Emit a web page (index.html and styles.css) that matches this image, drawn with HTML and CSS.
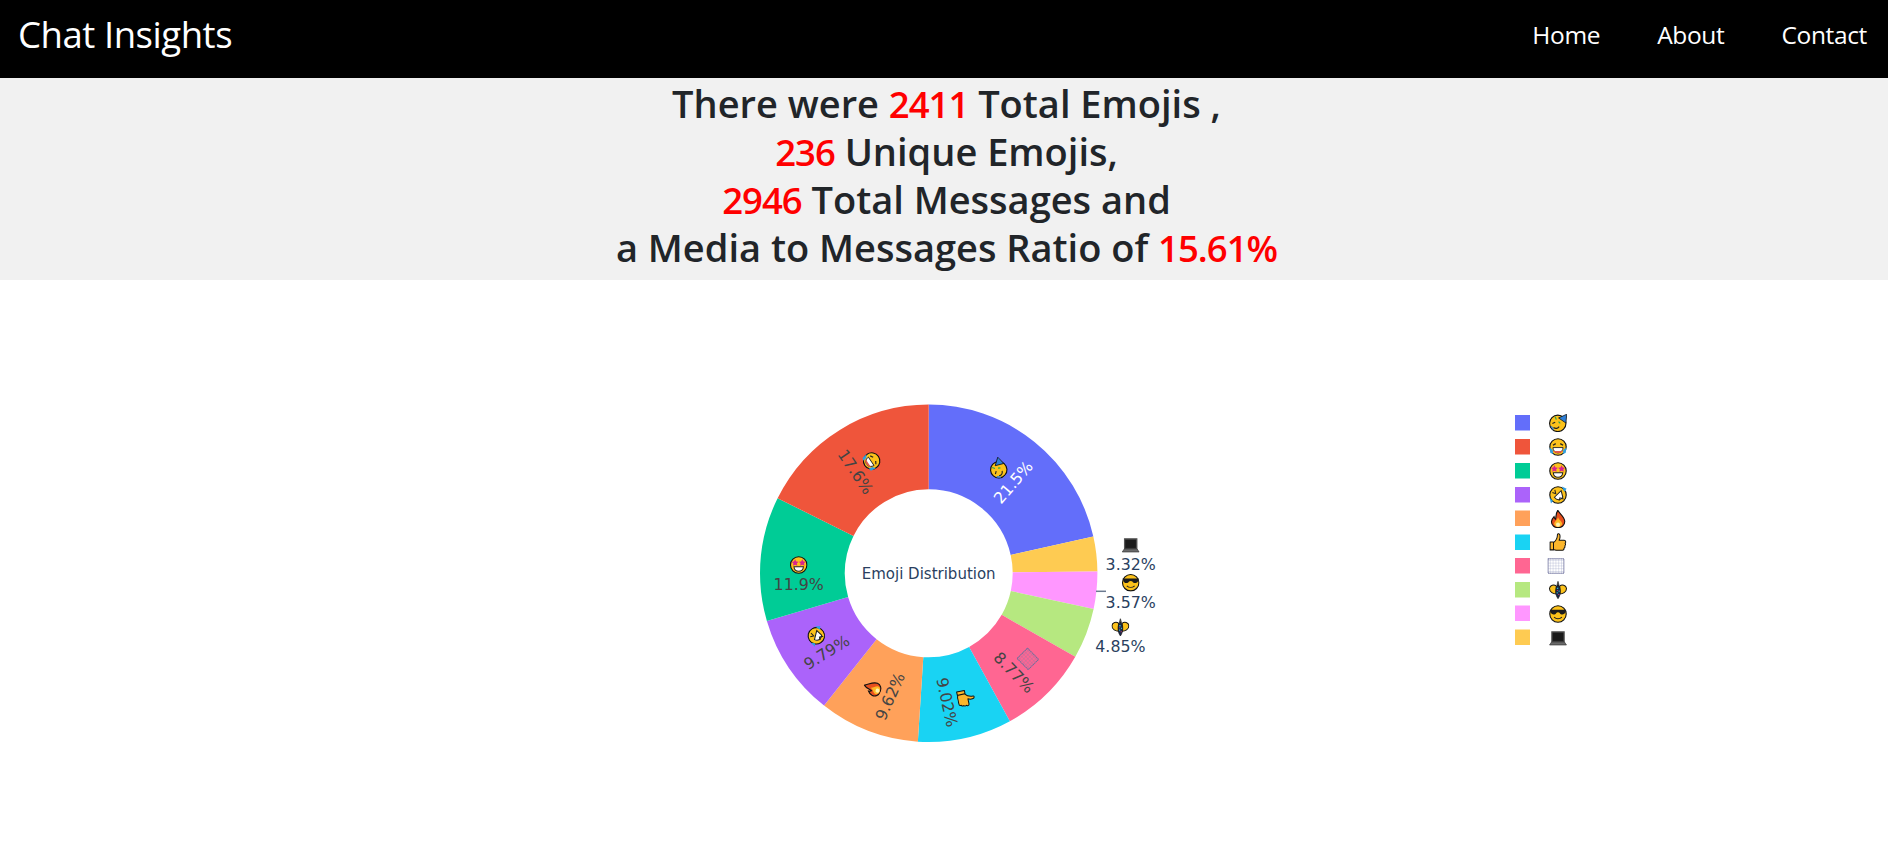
FILE: index.html
```html
<!DOCTYPE html>
<html lang="en">
<head>
<meta charset="utf-8">
<title>Chat Insights</title>
<link rel="stylesheet" href="styles.css">
</head>
<body>
<nav class="navbar">
  <a class="brand" href="#">Chat Insights</a>
  <ul class="nav-links">
    <li><a href="#">Home</a></li>
    <li><a href="#">About</a></li>
    <li><a href="#">Contact</a></li>
  </ul>
</nav>
<header class="summary">
  <h1>There were <span class="num">2411</span> Total Emojis ,<br>
  <span class="num">236</span> Unique Emojis,<br>
  <span class="num">2946</span> Total Messages and<br>
  a Media to Messages Ratio of <span class="num">15.61%</span></h1>
</header>
<main class="chart">
<svg class="plot" viewBox="0 280 1888 583" width="1888" height="583" xmlns="http://www.w3.org/2000/svg">
  <defs>
    <symbol id="e-party" viewBox="0 0 16 16">
      <circle cx="7.800" cy="8.300" r="7.300" fill="#fcc21b" stroke="#111" stroke-width="1"/>
      <path d="M8.500 3.500 15.800.2 15 8Z" fill="#2f7fd6" stroke="#111" stroke-width=".7"/>
      <path d="M3 8.500 5.500 7.300M4 12c2 1.500 4 .8 5-.8" fill="none" stroke="#222" stroke-width="1"/>
      <path d="M5.500 2.500 6.500 5M8.500 6.800l1.500 1.500" stroke="#2fa84f" stroke-width="1.100"/>
      <path d="M2 11 4 14" stroke="#2f7fd6" stroke-width="1.200"/>
    </symbol>
    <symbol id="e-joy" viewBox="0 0 16 16">
      <circle cx="8" cy="8" r="7.300" fill="#fcc21b" stroke="#111" stroke-width="1"/>
      <path d="M3.500 6.500 6 5M12.500 6.500 10 5" stroke="#222" stroke-width="1.100" fill="none"/>
      <path d="M3.500 8.500h9C12.500 11 10.500 13.300 8 13.300S3.500 11 3.500 8.500Z" fill="#fff" stroke="#222" stroke-width=".8"/>
      <path d="M3.500 11.500h9C11.500 12.700 9.800 13.300 8 13.300S4.500 12.700 3.500 11.500Z" fill="#e2574c"/>
      <path d="M.5 8.500 3.200 10.500 3.800 14 1.200 13.300ZM15.500 8.500 12.800 10.500 12.200 14 14.800 13.300Z" fill="#2f9ee0"/>
    </symbol>
    <symbol id="e-star" viewBox="0 0 16 16">
      <circle cx="8" cy="8" r="7.300" fill="#fcc21b" stroke="#111" stroke-width="1"/>
      <path d="M4.800 2.800 5.800 4.800 7.900 5.200 6.300 6.600 6.800 8.700 4.800 7.700 2.800 8.700 3.300 6.600 1.700 5.200 3.800 4.800ZM11.200 2.800 12.200 4.800 14.300 5.200 12.700 6.600 13.200 8.700 11.200 7.700 9.200 8.700 9.700 6.600 8.100 5.200 10.200 4.800Z" fill="#d9228f"/>
      <path d="M3.800 9.500h8.400C12 12 10.300 13.500 8 13.500S4 12 3.800 9.500Z" fill="#fff" stroke="#222" stroke-width=".9"/>
    </symbol>
    <symbol id="e-rofl" viewBox="0 0 16 16">
      <circle cx="8" cy="8" r="7.300" fill="#fcc21b" stroke="#111" stroke-width="1"/>
      <path d="M4.800 10 10.800 4.200 12.300 10C10 12.800 7 13 4.800 10Z" fill="#fff" stroke="#222" stroke-width=".9"/>
      <path d="M3 5.800 6 6.800 5.200 3.500M9 13 9.700 10.500 13 11.500" fill="none" stroke="#222" stroke-width=".9"/>
      <path d="M11.500 .5 15.700 2.500 13.500 5ZM.5 10.500 3.500 13 1.800 15.500Z" fill="#2f9ee0"/>
    </symbol>
    <symbol id="e-fire" viewBox="0 0 16 16">
      <path d="M7.800.3C9 3 14 6 14 10.300 14 13.500 11.200 15.700 8 15.700 4.800 15.700 2.200 13.500 2.200 10.500 2.200 8.500 3.300 7 4.500 5.800 4.800 7 5 8 5.800 8.200 6.500 5.500 6 3 7.800.3Z" fill="#e8501e" stroke="#111" stroke-width="1"/>
      <path d="M8 6.500C9 9 11.700 10.300 11.700 12.300 11.700 14 9.800 15.100 8 15.100 6.200 15.100 4.600 14 4.600 12.300 4.600 10.500 7 9.500 8 6.500Z" fill="#fdb827"/>
      <circle cx="8" cy="13" r="1.800" fill="#fff3b0"/>
    </symbol>
    <symbol id="e-thumb" viewBox="0 0 16 16">
      <path d="M1 8h3v7H1ZM4 8.500C6 7 7.500 4.500 7.500 1.500 7.500 .3 9.700 .3 9.800 2.500 10 4 9.500 5.500 9 6.500H13.500C15 6.500 15.300 8.500 14.300 9 15 10 14.700 11 14 11.400 14.500 12.300 14 13.300 13.300 13.500 13.500 14.500 13 15.300 12 15.300H6.500C5.500 15.300 4.800 15 4 14.500Z" fill="#fbb62c" stroke="#111" stroke-width=".9" stroke-linejoin="round"/>
    </symbol>
    <pattern id="tofu-grid" width="2.500" height="2.500" patternUnits="userSpaceOnUse">
      <path d="M0 0h2.500M0 0v2.500" stroke="#7078a8" stroke-opacity=".75" stroke-width=".5" fill="none"/>
    </pattern>
    <symbol id="e-tofu" viewBox="0 0 16 16">
      <rect x="1" y="1.500" width="14" height="13" fill="url(#tofu-grid)" stroke="#6c6f9c" stroke-width=".9" stroke-dasharray="1.400 .4"/>
    </symbol>
    <symbol id="e-pinata" viewBox="0 0 16 16">
      <path d="M8 .3 9 4H7Z" fill="#555" stroke="#222" stroke-width=".6"/>
      <path d="M6.500 4.500C4.500 2.800 .8 3.500 .5 6.500 .3 10 4 11.500 6.500 11.500ZM9.500 4.500C11.500 2.800 15.200 3.500 15.500 6.500 15.700 10 12 11.500 9.500 11.500Z" fill="#fcc21b" stroke="#111" stroke-width=".9"/>
      <path d="M8 3.500C10.800 5.500 10.800 12 8 15.700 5.200 12 5.200 5.500 8 3.500Z" fill="#1b2a4a" stroke="#111" stroke-width=".6"/>
      <path d="M7 6h1.200v1.200H7ZM8.500 8.500h1v1h-1ZM6.800 10h1v1h-1Z" fill="#2fb5c9"/>
      <path d="M8.200 11.500h1v1h-1ZM7 8h.8v.8H7Z" fill="#d9376e"/>
    </symbol>
    <symbol id="e-cool" viewBox="0 0 16 16">
      <circle cx="8" cy="8" r="7.300" fill="#fcc21b" stroke="#111" stroke-width="1"/>
      <path d="M.8 4.300h14.400L14.500 6.500C14 8.700 10.500 9 9.500 7 9 6.200 7 6.200 6.500 7 5.500 9 2 8.700 1.500 6.500Z" fill="#1c1c1c"/>
      <path d="M4.500 10.800C6.500 12.500 9.500 12.500 11.500 10.800" fill="none" stroke="#222" stroke-width="1"/>
    </symbol>
    <symbol id="e-laptop" viewBox="0 0 16 16">
      <path d="M2.500 2.500h11v9h-11Z" fill="#2b2b2b" stroke="#555" stroke-width="1"/>
      <path d="M3.500 3.500h9v7h-9Z" fill="#1b1b1b"/>
      <path d="M2.300 11.500h11.400L15.500 14.200H.5Z" fill="#6a6a6a" stroke="#333" stroke-width=".6"/>
    </symbol>
  </defs>

  <g class="donut" fill="none" stroke-width="84.7" transform="rotate(-90 928.7 573.300)">
    <circle cx="928.700" cy="573.300" r="126.350" pathLength="100" stroke="#636efa" stroke-dasharray="21.500 78.500" stroke-dashoffset="0"/>
    <circle cx="928.700" cy="573.300" r="126.350" pathLength="100" stroke="#fecb52" stroke-dasharray="3.320 96.680" stroke-dashoffset="-21.500"/>
    <circle cx="928.700" cy="573.300" r="126.350" pathLength="100" stroke="#ff97ff" stroke-dasharray="3.570 96.430" stroke-dashoffset="-24.820"/>
    <circle cx="928.700" cy="573.300" r="126.350" pathLength="100" stroke="#b6e880" stroke-dasharray="4.850 95.150" stroke-dashoffset="-28.390"/>
    <circle cx="928.700" cy="573.300" r="126.350" pathLength="100" stroke="#ff6692" stroke-dasharray="8.770 91.230" stroke-dashoffset="-33.240"/>
    <circle cx="928.700" cy="573.300" r="126.350" pathLength="100" stroke="#19d3f3" stroke-dasharray="9.020 90.980" stroke-dashoffset="-42.010"/>
    <circle cx="928.700" cy="573.300" r="126.350" pathLength="100" stroke="#ffa15a" stroke-dasharray="9.620 90.380" stroke-dashoffset="-51.030"/>
    <circle cx="928.700" cy="573.300" r="126.350" pathLength="100" stroke="#ab63fa" stroke-dasharray="9.790 90.210" stroke-dashoffset="-60.650"/>
    <circle cx="928.700" cy="573.300" r="126.350" pathLength="100" stroke="#00cc96" stroke-dasharray="11.900 88.100" stroke-dashoffset="-70.440"/>
    <circle cx="928.700" cy="573.300" r="126.350" pathLength="100" stroke="#ef553b" stroke-dasharray="17.660 82.340" stroke-dashoffset="-82.340"/>
  </g>

  <text class="center-title" x="928.700" y="579">Emoji Distribution</text>

  <g transform="translate(1007.700 477.300) rotate(-49)"><use href="#e-party" x="-9" y="-21" width="18" height="18"/><text class="pct pct-light" y="13">21.5%</text></g>
  <g transform="translate(861.700 467.700) rotate(56)"><use href="#e-joy" x="-9" y="-21" width="18" height="18"/><text class="pct pct-dark" y="13">17.6%</text></g>
  <g transform="translate(798.700 577)"><use href="#e-star" x="-9" y="-21" width="18" height="18"/><text class="pct pct-dark" y="13">11.9%</text></g>
  <g transform="translate(822.700 646) rotate(-32)"><use href="#e-rofl" x="-9" y="-21" width="18" height="18"/><text class="pct pct-dark" y="13">9.79%</text></g>
  <g transform="translate(883.300 693.300) rotate(-66)"><use href="#e-fire" x="-9" y="-21" width="18" height="18"/><text class="pct pct-dark" y="13">9.62%</text></g>
  <g transform="translate(954.300 700.700) rotate(77.500)"><use href="#e-thumb" x="-9" y="-21" width="18" height="18"/><text class="pct pct-dark" y="13">9.02%</text></g>
  <g transform="translate(1019.300 667.300) rotate(45.500)"><use href="#e-tofu" x="-9" y="-21" width="18" height="18"/><text class="pct pct-dark" y="13">8.77%</text></g>
  <g transform="translate(1130.700 557)"><use href="#e-laptop" x="-9" y="-21" width="18" height="18"/><text class="pct pct-out" y="13">3.32%</text></g>
  <g transform="translate(1130.700 594.700)"><use href="#e-cool" x="-9" y="-21" width="18" height="18"/><text class="pct pct-out" y="13">3.57%</text></g>
  <g transform="translate(1120.400 639.300)"><use href="#e-pinata" x="-9" y="-21" width="18" height="18"/><text class="pct pct-out" y="13">4.85%</text></g>
  <path class="connector" d="M1096 591.300h10"/>

  <g class="legend">
    <rect x="1515" y="415" width="15" height="15.500" fill="#636efa"/><use href="#e-party" x="1549" y="414" width="18" height="18"/>
    <rect x="1515" y="439" width="15" height="15.500" fill="#ef553b"/><use href="#e-joy" x="1549" y="438" width="18" height="18"/>
    <rect x="1515" y="463" width="15" height="15.500" fill="#00cc96"/><use href="#e-star" x="1549" y="462" width="18" height="18"/>
    <rect x="1515" y="487" width="15" height="15.500" fill="#ab63fa"/><use href="#e-rofl" x="1549" y="486" width="18" height="18"/>
    <rect x="1515" y="510.500" width="15" height="15.500" fill="#ffa15a"/><use href="#e-fire" x="1549" y="510" width="18" height="18"/>
    <rect x="1515" y="534.500" width="15" height="15.500" fill="#19d3f3"/><use href="#e-thumb" x="1549" y="533" width="18" height="18"/>
    <rect x="1515" y="558" width="15" height="15.500" fill="#ff6692"/><use href="#e-tofu" x="1547" y="557" width="18" height="18"/>
    <rect x="1515" y="582" width="15" height="15.500" fill="#b6e880"/><use href="#e-pinata" x="1549" y="581" width="18" height="18"/>
    <rect x="1515" y="605.500" width="15" height="15.500" fill="#ff97ff"/><use href="#e-cool" x="1549" y="605" width="18" height="18"/>
    <rect x="1515" y="629.500" width="15" height="15.500" fill="#fecb52"/><use href="#e-laptop" x="1549" y="629" width="18" height="18"/>
  </g>
</svg>
</main>
</body>
</html>
```
FILE: styles.css
```css
* { box-sizing: border-box; }
html, body { margin: 0; padding: 0; }
body {
  background: #fff;
  color: #212529;
  font-family: "Open Sans", "Noto Sans", "Liberation Sans", sans-serif;
  overflow: hidden;
}
.navbar {
  height: 78px;
  background: #000;
  display: flex;
  align-items: center;
  justify-content: space-between;
  padding: 0 21px 10px 18px;
}
.brand {
  color: #fff;
  text-decoration: none;
  font-size: 36.5px;
  line-height: 1;
  letter-spacing: -0.45px;
}
.nav-links {
  display: flex;
  gap: 57px;
  list-style: none;
  margin: 0;
  padding: 0;
}
.nav-links a {
  color: #fff;
  text-decoration: none;
  font-size: 24.5px;
  letter-spacing: -0.35px;
}
.summary {
  height: 202px;
  background: #f1f1f1;
  text-align: center;
}
.summary h1 {
  margin: 0;
  font-size: 38px;
  font-weight: 600;
  line-height: 48px;
  padding: 1px 0 0 5px;
}
.num { color: #f00; font-size: 36.5px; line-height: 1; letter-spacing: -1px; }
.chart { height: 583px; }
.plot { display: block; }
.center-title {
  font-family: "DejaVu Sans", Verdana, sans-serif;
  font-size: 15px;
  fill: #2a3f5f;
  text-anchor: middle;
}
.pct {
  font-family: "DejaVu Sans", Verdana, sans-serif;
  font-size: 15.800px;
  text-anchor: middle;
}
.pct-light { fill: #fff; }
.pct-dark { fill: #444; }
.pct-out { fill: #2a3f5f; }
.connector { stroke: #6b7a90; stroke-width: 1.5; fill: none; }
```
